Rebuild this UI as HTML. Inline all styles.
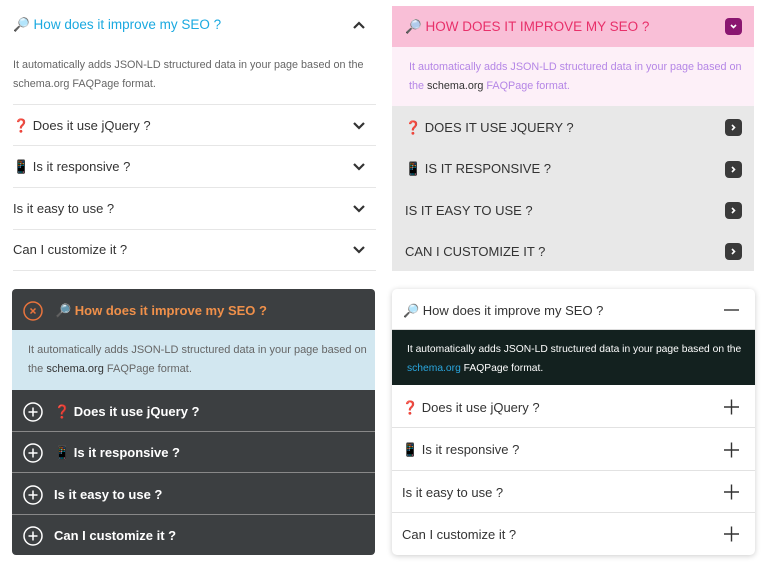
<!DOCTYPE html>
<html><head><meta charset="utf-8"><style>
*{margin:0;padding:0;box-sizing:border-box}
body{width:768px;height:569px;background:#fff;position:relative;font-family:"Liberation Sans",sans-serif;overflow:hidden}
.a{position:absolute}
.t{position:absolute;font-size:13px;white-space:nowrap;line-height:16px}
.p{position:absolute;font-size:11px;line-height:19px;white-space:nowrap}
.hl{position:absolute;height:1px}
</style></head><body>
<!-- Panel 1 -->
<div class="t" style="left:13px;top:17px;color:#1aa9e0;font-size:13.5px">🔎 How does it improve my SEO ?</div>
<svg class="a" style="left:352px;top:19px" width="14" height="12"><path d="M2 9 L7 4 L12 9" stroke="#333" stroke-width="2.2" fill="none"/></svg>
<div class="p" style="left:13px;top:56px;color:#666;font-size:10.8px">It automatically adds JSON-LD structured data in your page based on the<br>schema.org FAQPage format.</div>
<div class="hl" style="left:13px;top:104px;width:363px;background:#e6e6e6"></div>
<div class="t" style="left:13px;top:118px;color:#333">❓ Does it use jQuery ?</div>
<div class="hl" style="left:13px;top:145px;width:363px;background:#e6e6e6"></div>
<div class="t" style="left:13px;top:159px;color:#333">📱 Is it responsive ?</div>
<div class="hl" style="left:13px;top:187px;width:363px;background:#e6e6e6"></div>
<div class="t" style="left:13px;top:201px;color:#333">Is it easy to use ?</div>
<div class="hl" style="left:13px;top:229px;width:363px;background:#e6e6e6"></div>
<div class="t" style="left:13px;top:242px;color:#333">Can I customize it ?</div>
<div class="hl" style="left:13px;top:270px;width:363px;background:#e6e6e6"></div>
<svg class="a" style="left:352px;top:120px" width="14" height="150"><g stroke="#333" stroke-width="2.2" fill="none"><path d="M2 3 L7 8 L12 3"/><path d="M2 44 L7 49 L12 44"/><path d="M2 86 L7 91 L12 86"/><path d="M2 127 L7 132 L12 127"/></g></svg>

<!-- Panel 2 -->
<div class="a" style="left:392px;top:6px;width:362px;height:41px;background:#f9bfd7"></div>
<div class="a" style="left:392px;top:47px;width:362px;height:59px;background:#fdf0f8"></div>
<div class="a" style="left:392px;top:106px;width:362px;height:165px;background:#e8e8e8"></div>
<div class="t" style="left:405px;top:19px;color:#e8306a;font-size:13.5px">🔎 HOW DOES IT IMPROVE MY SEO ?</div>
<div class="a" style="left:725px;top:18px;width:17px;height:17px;border-radius:4px;background:#8a1670"></div>
<svg class="a" style="left:729px;top:22px" width="9" height="9"><path d="M2 3 L4.5 5.5 L7 3" stroke="#fff" stroke-width="1.6" fill="none"/></svg>
<div class="p" style="left:409px;top:58px;color:#b586e6;font-size:10.8px">It automatically adds JSON-LD structured data in your page based on<br>the <span style="color:#333">schema.org</span> FAQPage format.</div>
<div class="t" style="left:405px;top:120px;color:#333">❓ DOES IT USE JQUERY ?</div>
<div class="t" style="left:405px;top:161px;color:#333">📱 IS IT RESPONSIVE ?</div>
<div class="t" style="left:405px;top:203px;color:#333">IS IT EASY TO USE ?</div>
<div class="t" style="left:405px;top:244px;color:#333">CAN I CUSTOMIZE IT ?</div>
<svg class="a" style="left:725px;top:119px" width="18" height="142"><g fill="#3a3a3a"><rect x="0" y="0" width="17" height="17" rx="4"/><rect x="0" y="42" width="17" height="17" rx="4"/><rect x="0" y="83" width="17" height="17" rx="4"/><rect x="0" y="124" width="17" height="17" rx="4"/></g><g stroke="#fff" stroke-width="1.6" fill="none"><path d="M7 6 L9.5 8.5 L7 11"/><path d="M7 48 L9.5 50.5 L7 53"/><path d="M7 89 L9.5 91.5 L7 94"/><path d="M7 130 L9.5 132.5 L7 135"/></g></svg>

<!-- Panel 3 -->
<div class="a" style="left:12px;top:289px;width:363px;height:266px;background:#3c3f41;border-radius:4px;overflow:hidden">
 <div class="a" style="left:0;top:41px;width:363px;height:60px;background:#d2e7f0"></div>
 <div class="a" style="left:0;top:142px;width:363px;height:1px;background:#888"></div>
 <div class="a" style="left:0;top:183px;width:363px;height:1px;background:#888"></div>
 <div class="a" style="left:0;top:225px;width:363px;height:1px;background:#888"></div>
</div>
<svg class="a" style="left:22px;top:299px" width="22" height="250"><g fill="none" stroke-width="1.5"><circle cx="11" cy="12" r="9" stroke="#e8743d"/><path d="M8.5 9.5 L13.5 14.5 M13.5 9.5 L8.5 14.5" stroke="#e8743d"/><g stroke="#fff"><circle cx="11" cy="113" r="9"/><path d="M6.5 113 H15.5 M11 108.5 V117.5"/><circle cx="11" cy="154" r="9"/><path d="M6.5 154 H15.5 M11 149.5 V158.5"/><circle cx="11" cy="196" r="9"/><path d="M6.5 196 H15.5 M11 191.5 V200.5"/><circle cx="11" cy="237" r="9"/><path d="M6.5 237 H15.5 M11 232.5 V241.5"/></g></g></svg>
<div class="t" style="left:55px;top:303px;color:#f0904a;font-weight:bold;font-size:13px">🔎 How does it improve my SEO ?</div>
<div class="p" style="left:28px;top:341px;color:#666">It automatically adds JSON-LD structured data in your page based on<br>the <span style="color:#333">schema.org</span> FAQPage format.</div>
<div class="t" style="left:54px;top:404px;color:#fff;font-weight:bold">❓ Does it use jQuery ?</div>
<div class="t" style="left:54px;top:445px;color:#fff;font-weight:bold">📱 Is it responsive ?</div>
<div class="t" style="left:54px;top:487px;color:#fff;font-weight:bold">Is it easy to use ?</div>
<div class="t" style="left:54px;top:528px;color:#fff;font-weight:bold">Can I customize it ?</div>

<!-- Panel 4 -->
<div class="a" style="left:392px;top:289px;width:363px;height:266px;background:#fff;border-radius:5px;box-shadow:0 1px 6px rgba(0,0,0,.2);overflow:hidden">
 <div class="a" style="left:0;top:41px;width:363px;height:55px;background:#13211f"></div>
 <div class="a" style="left:0;top:138px;width:363px;height:1px;background:#e2e2e2"></div>
 <div class="a" style="left:0;top:181px;width:363px;height:1px;background:#e2e2e2"></div>
 <div class="a" style="left:0;top:223px;width:363px;height:1px;background:#e2e2e2"></div>
 <div class="a" style="left:0;top:40px;width:363px;height:1px;background:#ddd"></div>
</div>
<div class="t" style="left:403px;top:303px;color:#333">🔎 How does it improve my SEO ?</div>
<div class="p" style="left:407px;top:340px;color:#fff;font-size:10.3px">It automatically adds JSON-LD structured data in your page based on the<br><span style="color:#2aa6de">schema.org</span> FAQPage format.</div>
<div class="t" style="left:402px;top:400px;color:#333">❓ Does it use jQuery ?</div>
<div class="t" style="left:402px;top:442px;color:#333">📱 Is it responsive ?</div>
<div class="t" style="left:402px;top:485px;color:#333">Is it easy to use ?</div>
<div class="t" style="left:402px;top:527px;color:#333">Can I customize it ?</div>
<svg class="a" style="left:723px;top:302px" width="18" height="245"><g stroke="#333" stroke-width="1.4" fill="none"><path d="M1 8 H16"/><path d="M1 105 H16 M8.5 97.5 V112.5"/><path d="M1 148 H16 M8.5 140.5 V155.5"/><path d="M1 190 H16 M8.5 182.5 V197.5"/><path d="M1 232 H16 M8.5 224.5 V239.5"/></g></svg>
</body></html>
